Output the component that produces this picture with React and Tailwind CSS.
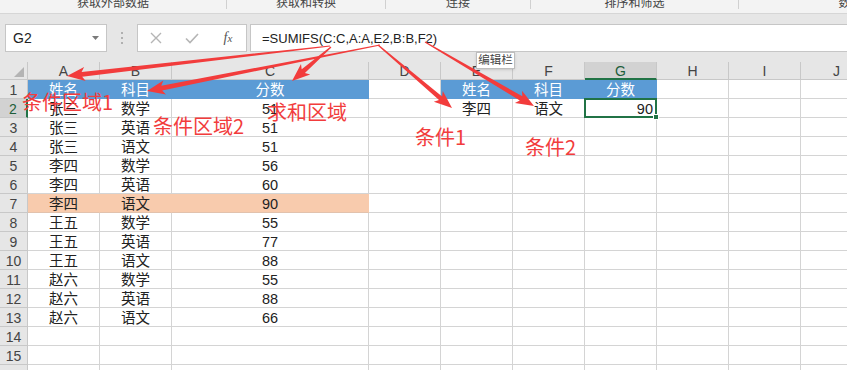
import React from 'react';

const COLS = [
  { k: 'A', w: 'w-[72px]' },
  { k: 'B', w: 'w-[72px]' },
  { k: 'C', w: 'w-[197px]' },
  { k: 'D', w: 'w-[72px]' },
  { k: 'E', w: 'w-[72px]' },
  { k: 'F', w: 'w-[72px]' },
  { k: 'G', w: 'w-[72px]' },
  { k: 'H', w: 'w-[72px]' },
  { k: 'I', w: 'w-[72px]' },
  { k: 'J', w: 'w-[72px]' },
];

const ROWS = [
  ['姓名', '科目', '分数', '', '姓名', '科目', '分数'],
  ['张三', '数学', '51', '', '李四', '语文', '90'],
  ['张三', '英语', '51'],
  ['张三', '语文', '51'],
  ['李四', '数学', '56'],
  ['李四', '英语', '60'],
  ['李四', '语文', '90'],
  ['王五', '数学', '55'],
  ['王五', '英语', '77'],
  ['王五', '语文', '88'],
  ['赵六', '数学', '55'],
  ['赵六', '英语', '88'],
  ['赵六', '语文', '66'],
  [],
  [],
  [],
];

const RIBBON = [
  { label: '获取外部数据', w: 'w-[227px]' },
  { label: '获取和转换', w: 'w-[159px]' },
  { label: '连接', w: 'w-[145px]' },
  { label: '排序和筛选', w: 'w-[208px]' },
  { label: '数据工具', w: 'w-[248px]' },
];

// tail -> head, drawn as a tapered shaft with a barbed head
const ARROWS = [
  [330, 46, 67, 76],
  [380, 45, 147, 91],
  [331, 47, 292, 81],
  [378, 45, 452, 108],
  [425, 42, 534, 106],
];

function arrowPoints(x1, y1, x2, y2) {
  const dx = x2 - x1;
  const dy = y2 - y1;
  const len = Math.hypot(dx, dy);
  const ux = dx / len;
  const uy = dy / len;
  const nx = -uy;
  const ny = ux;
  const head = 18;
  const hw = 7;
  const bx = x2 - ux * head;
  const by = y2 - uy * head;
  const jx = bx + ux * 3;
  const jy = by + uy * 3;
  const p = [
    [x1 + nx * 0.6, y1 + ny * 0.6],
    [jx + nx * 2.4, jy + ny * 2.4],
    [bx + nx * hw, by + ny * hw],
    [x2, y2],
    [bx - nx * hw, by - ny * hw],
    [jx - nx * 2.4, jy - ny * 2.4],
    [x1 - nx * 0.6, y1 - ny * 0.6],
  ];
  return p.map(([x, y]) => `${x.toFixed(1)},${y.toFixed(1)}`).join(' ');
}

function Cell({ col, ci, r, v }) {
  const blue = r === 1 && [0, 1, 2, 4, 5, 6].includes(ci);
  const peach = r === 7 && ci < 3;
  const sel = r === 2 && ci === 6;

  if (blue) {
    return (
      <div className={`${col.w} h-[19px] shrink-0 border-r border-b border-[#5b9bd5] bg-[#5b9bd5] text-white flex items-center justify-center pt-[2px] text-[14.5px] leading-none`}>
        {v}
      </div>
    );
  }
  if (peach) {
    return (
      <div className={`${col.w} h-[19px] shrink-0 border-r border-b border-r-[#f8cbad] border-b-[#e2c2ad] bg-[#f8cbad] text-[#222] flex items-center justify-center pt-[2px] text-[14.5px] leading-none`}>
        {v}
      </div>
    );
  }
  if (sel) {
    return (
      <div className={`${col.w} relative h-[19px] shrink-0 border-r border-b border-[#d4d4d4] text-[#222] flex items-center justify-end pr-[3px] pt-[2px] text-[14.5px] leading-none`}>
        {v}
        <span className="absolute -left-[1px] -top-[1px] -right-[1px] -bottom-[1px] border-2 border-[#217346]" />
        <span className="absolute -right-[3px] -bottom-[3px] w-[6px] h-[6px] bg-[#217346] border border-white" />
      </div>
    );
  }
  return (
    <div className={`${col.w} h-[19px] shrink-0 border-r border-b border-[#d4d4d4] text-[#222] flex items-center justify-center pt-[2px] text-[14.5px] leading-none`}>
      {v}
    </div>
  );
}

function XIcon() {
  return (
    <svg width="12" height="12" viewBox="0 0 12 12">
      <path d="M1 1 L11 11 M11 1 L1 11" stroke="#b5b5b5" strokeWidth="1.4" fill="none" />
    </svg>
  );
}

function CheckIcon() {
  return (
    <svg width="14" height="11" viewBox="0 0 14 11">
      <path d="M1 5.5 L5 9.5 L13 1" stroke="#b5b5b5" strokeWidth="1.6" fill="none" />
    </svg>
  );
}

export default function App() {
  return (
    <div className="relative w-[847px] h-[370px] overflow-hidden bg-white font-['Liberation_Sans','Noto_Sans_CJK_SC',sans-serif]">
      {/* ribbon group labels, cut at the top */}
      <div className="h-[14px] flex items-start overflow-hidden bg-[#f3f3f3] border-b border-[#d6d6d6]">
        {RIBBON.map((g) => (
          <div key={g.label} className={`${g.w} shrink-0 h-[9px] border-r border-[#d0d0d0] flex justify-center`}>
            <span className="-mt-[3px] text-[12px] leading-none text-[#444] whitespace-nowrap">{g.label}</span>
          </div>
        ))}
      </div>

      {/* formula bar */}
      <div className="h-[48px] bg-[#e6e6e6] flex items-start pt-[10px]">
        <div className="ml-[5px] w-[102px] h-[28px] shrink-0 bg-white border border-[#c6c6c6] flex items-center justify-between pl-[7px] pr-[7px]">
          <span className="text-[14px] text-[#222] leading-none">G2</span>
          <svg width="7" height="4" viewBox="0 0 7 4">
            <path d="M0 0 H7 L3.5 4 Z" fill="#7a7a7a" />
          </svg>
        </div>
        <div className="w-[30px] h-[28px] shrink-0 flex flex-col items-center justify-center gap-[3px]">
          <span className="w-[2px] h-[2px] bg-[#b0b0b0]" />
          <span className="w-[2px] h-[2px] bg-[#b0b0b0]" />
          <span className="w-[2px] h-[2px] bg-[#b0b0b0]" />
        </div>
        <div className="w-[110px] h-[28px] shrink-0 bg-white border border-[#c6c6c6] flex items-center">
          <div className="w-[36px] flex justify-center"><XIcon /></div>
          <div className="w-[36px] flex justify-center"><CheckIcon /></div>
          <div className="w-[36px] flex justify-center items-baseline font-['Liberation_Serif',serif] italic text-[#555] leading-none">
            <span className="text-[14px]">f</span>
            <span className="text-[11px]">x</span>
          </div>
        </div>
        <div className="ml-[3px] w-[620px] h-[28px] shrink-0 bg-white border border-[#c6c6c6] flex items-center pl-[11px]">
          <span className="text-[13px] leading-none text-[#222] whitespace-nowrap">=SUMIFS(C:C,A:A,E2,B:B,F2)</span>
        </div>
      </div>

      {/* sheet */}
      <div className="flex flex-col">
        <div className="flex">
          <div className="w-[28px] h-[18px] shrink-0 bg-[#e6e6e6] border-r border-b border-[#c8c8c8] flex items-end justify-end pr-[3px] pb-[2px]">
            <svg width="10" height="10" viewBox="0 0 10 10">
              <path d="M10 0 V10 H0 Z" fill="#b4b4b4" />
            </svg>
          </div>
          {COLS.map((c) =>
            c.k === 'G' ? (
              <div key={c.k} className={`${c.w} h-[18px] shrink-0 bg-[#d2d2d2] border-r border-b-2 border-r-[#c8c8c8] border-b-[#217346] flex items-center justify-center pt-[2px] text-[14px] leading-none text-[#1e5e3a]`}>
                {c.k}
              </div>
            ) : (
              <div key={c.k} className={`${c.w} h-[18px] shrink-0 bg-[#e6e6e6] border-r border-b border-[#c8c8c8] flex items-center justify-center pt-[1px] text-[14px] leading-none text-[#444]`}>
                {c.k}
              </div>
            )
          )}
        </div>

        {ROWS.map((row, i) => {
          const r = i + 1;
          return (
            <div key={r} className="flex">
              {r === 2 ? (
                <div className="w-[28px] h-[19px] shrink-0 bg-[#d2d2d2] border-r-2 border-b border-r-[#217346] border-b-[#c8c8c8] flex items-center justify-center pt-[1px] text-[14px] leading-none text-[#1e5e3a]">
                  {r}
                </div>
              ) : (
                <div className="w-[28px] h-[19px] shrink-0 bg-[#e6e6e6] border-r border-b border-[#c8c8c8] flex items-center justify-center pt-[1px] text-[14px] leading-none text-[#444]">
                  {r}
                </div>
              )}
              {COLS.map((c, ci) => (
                <Cell key={c.k} col={c} ci={ci} r={r} v={row[ci] || ''} />
              ))}
            </div>
          );
        })}
      </div>

      {/* tooltip */}
      <div className="absolute left-[476px] top-[52px] w-[39px] h-[17px] bg-white border border-[#bdbdbd] shadow-sm flex items-center justify-center text-[11.5px] leading-none text-[#444]">
        编辑栏
      </div>

      {/* red annotations */}
      <svg className="absolute left-0 top-0 pointer-events-none" width="847" height="370">
        {ARROWS.map((a, i) => (
          <polygon key={i} points={arrowPoints(...a)} fill="#f23c3c" />
        ))}
      </svg>
      <div className="absolute left-[22px] top-[92px] text-[20px] leading-none text-[#f23c3c] font-['Noto_Sans_CJK_SC',sans-serif] whitespace-nowrap">条件区域1</div>
      <div className="absolute left-[153px] top-[116px] text-[20px] leading-none text-[#f23c3c] font-['Noto_Sans_CJK_SC',sans-serif] whitespace-nowrap">条件区域2</div>
      <div className="absolute left-[267px] top-[102px] text-[20px] leading-none text-[#f23c3c] font-['Noto_Sans_CJK_SC',sans-serif] whitespace-nowrap">求和区域</div>
      <div className="absolute left-[415px] top-[127px] text-[20px] leading-none text-[#f23c3c] font-['Noto_Sans_CJK_SC',sans-serif] whitespace-nowrap">条件1</div>
      <div className="absolute left-[525px] top-[137px] text-[20px] leading-none text-[#f23c3c] font-['Noto_Sans_CJK_SC',sans-serif] whitespace-nowrap">条件2</div>
    </div>
  );
}
